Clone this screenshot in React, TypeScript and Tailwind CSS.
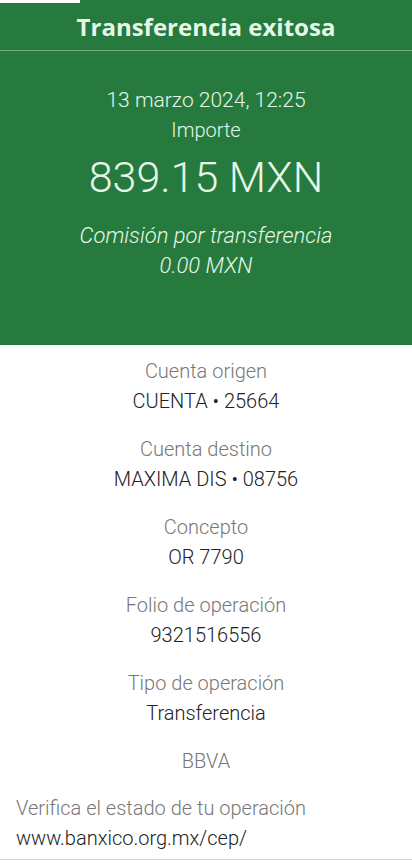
const rows = [
  { label: "Cuenta origen", value: "CUENTA • 25664" },
  { label: "Cuenta destino", value: "MAXIMA DIS • 08756" },
  { label: "Concepto", value: "OR 7790" },
  { label: "Folio de operación", value: "9321516556" },
  { label: "Tipo de operación", value: "Transferencia" },
];

export default function App() {
  return (
    <div className="w-[412px] h-[863px] bg-white overflow-hidden font-['Roboto','Noto_Sans',sans-serif]">
      {/* GREEN SUMMARY */}
      <div className="bg-[#267a3e] text-[#e6f7e8]">
        <div className="flex h-[3px]">
          <div className="w-[80px] bg-white" />
        </div>
        <div className="h-[47px] flex items-center justify-center">
          <h1 className="text-[24px] font-bold font-['Open_Sans',sans-serif]">Transferencia exitosa</h1>
        </div>
        <div className="h-px bg-[#6fae80]" />
        <div className="pt-[34px] pb-[64px] flex flex-col items-center font-light">
          <p className="text-[21px] leading-[30px]">13 marzo 2024, 12:25</p>
          <p className="text-[20px] leading-[30px]">Importe</p>
          <p className="mt-[9px] text-[43px] leading-[46px]">839.15 MXN</p>
          <p className="mt-[21px] text-[22px] leading-[30px] italic">Comisión por transferencia</p>
          <p className="text-[22px] leading-[30px] italic">0.00 MXN</p>
        </div>
      </div>

      {/* DETAILS */}
      <div className="pt-[11px] flex flex-col items-center font-light text-[20px] leading-[30px]">
        {rows.map((r) => (
          <div key={r.label} className="mb-[18px] flex flex-col items-center">
            <p className="text-[#777777]">{r.label}</p>
            <p className="text-[#222222]">{r.value}</p>
          </div>
        ))}
        <p className="text-[#777777]">BBVA</p>
      </div>

      <div className="mt-[17px] px-4 font-light text-[20px] leading-[30px]">
        <p className="text-[#777777]">Verifica el estado de tu operación</p>
        <p className="text-[#222222]">www.banxico.org.mx/cep/</p>
      </div>
      <div className="mt-[6px] h-px bg-[#d4d4d4]" />
    </div>
  );
}
